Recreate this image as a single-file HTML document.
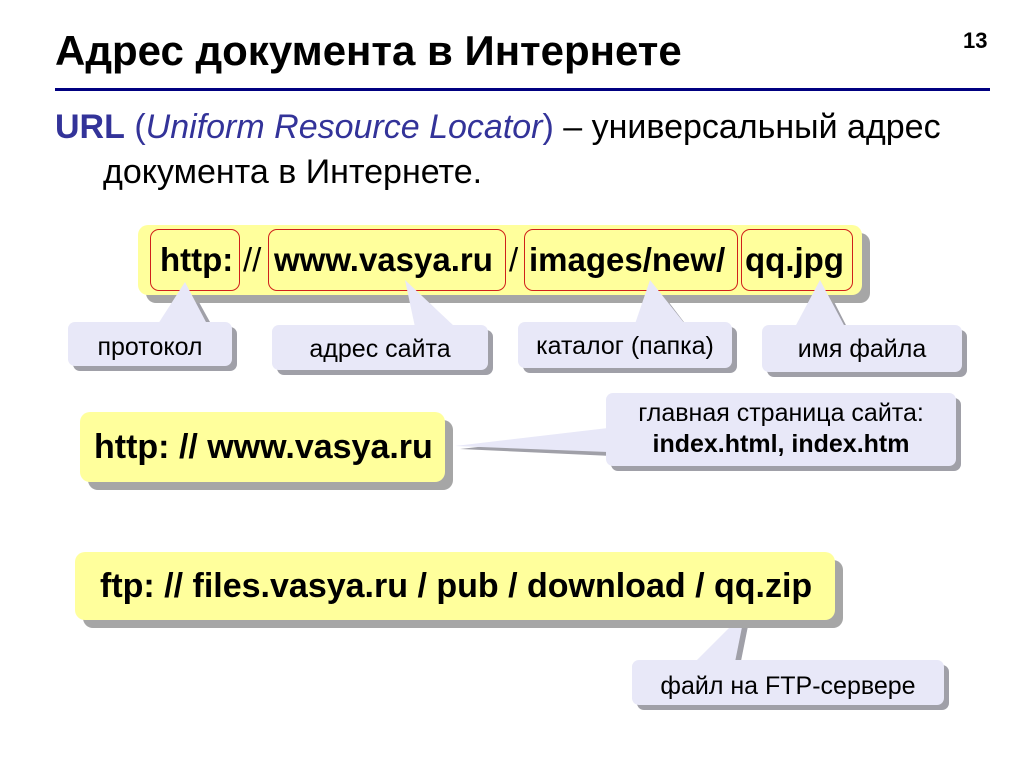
<!DOCTYPE html>
<html><head><meta charset="utf-8"><style>
body{margin:0;width:1024px;height:768px;background:#fff;position:relative;overflow:hidden;font-family:"Liberation Sans",Arial,sans-serif;color:#000}
.a{position:absolute;white-space:nowrap}
.y{position:absolute;background:#ffff9c;border-radius:10px;box-shadow:8px 8px 0 #a6a6a6}
.c{position:absolute;background:#e8e8f8;border-radius:7px;box-shadow:5px 5px 0 #a0a0a8;font-size:25px;text-align:center}
.r{position:absolute;border:1.5px solid #d0201a;border-radius:9px}
.b{position:absolute;white-space:nowrap;font-size:33px;font-weight:bold;top:241px}
</style></head><body>
<div class="a" style="left:55px;top:27px;font-size:42px;font-weight:bold">Адрес документа в Интернете</div>
<div class="a" style="left:963px;top:28px;font-size:22px;font-weight:bold">13</div>
<div class="a" style="left:55px;top:88px;width:935px;height:3px;background:#000080"></div>
<div class="a" style="left:55px;top:108px;font-size:34px"><b style="color:#333399">URL</b> <span style="color:#333399">(<i>Uniform Resource Locator</i>)</span> – универсальный адрес</div>
<div class="a" style="left:103px;top:153px;font-size:34px">документа в Интернете.</div>

<svg class="a" style="left:0;top:0" width="1024" height="768">
<g fill="#a0a0a8"><polygon points="190,286 215,331 163,331"/><polygon points="410,284 460,333 420,333"/><polygon points="655,284 690,330 640,330"/><polygon points="825,284 850,333 800,333"/><polygon points="460,449 612,432 612,456"/><polygon points="750,616 700,666 740,666"/></g>
</svg>

<div class="y" style="left:138px;top:225px;width:724px;height:70px"></div>
<div class="r" style="left:150px;top:229px;width:88px;height:60px"></div>
<div class="r" style="left:268px;top:229px;width:236px;height:60px"></div>
<div class="r" style="left:524px;top:229px;width:212px;height:60px"></div>
<div class="r" style="left:741px;top:229px;width:110px;height:60px"></div>
<div class="b" style="left:160px">http:</div>
<div class="b" style="left:243px;font-weight:normal">//</div>
<div class="b" style="left:274px">www.vasya.ru</div>
<div class="b" style="left:509px;font-weight:normal">/</div>
<div class="b" style="left:529px">images/new/</div>
<div class="b" style="left:745px">qq.jpg</div>

<div class="c" style="left:68px;top:322px;width:164px;height:44px;line-height:50px">протокол</div>
<div class="c" style="left:272px;top:325px;width:216px;height:45px;line-height:48px">адрес сайта</div>
<div class="c" style="left:518px;top:322px;width:214px;height:46px;line-height:48px">каталог (папка)</div>
<div class="c" style="left:762px;top:325px;width:200px;height:47px;line-height:48px">имя файла</div>
<svg class="a" style="left:0;top:0" width="1024" height="768">
<g fill="#e8e8f8"><polygon points="185,282 207,324 158,324"/><polygon points="405,280 455,327 415,327"/><polygon points="650,280 685,324 635,324"/><polygon points="820,280 845,327 795,327"/><polygon points="455,446 608,428 608,452"/><polygon points="745,612 695,662 735,662"/></g>
</svg>

<div class="y" style="left:80px;top:412px;width:365px;height:70px"></div>
<div class="a" style="left:94px;top:428px;font-size:34px;font-weight:bold">http: // www.vasya.ru</div>
<div class="c" style="left:606px;top:393px;width:350px;height:73px;line-height:31px;padding-top:5px;box-sizing:border-box">главная страница сайта:<br><b>index.html, index.htm</b></div>

<div class="y" style="left:75px;top:552px;width:760px;height:68px"></div>
<div class="a" style="left:100px;top:567px;font-size:34px;font-weight:bold">ftp: // files.vasya.ru / pub / download / qq.zip</div>
<div class="c" style="left:632px;top:660px;width:312px;height:45px;line-height:52px">файл на FTP-сервере</div>
</body></html>
